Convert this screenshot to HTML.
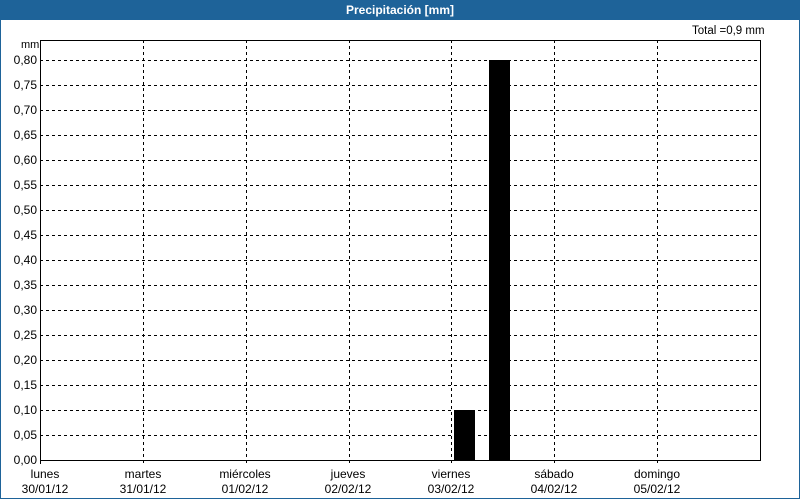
<!DOCTYPE html>
<html><head><style>
body{margin:0;width:800px;height:500px;background:#fff;font-family:"Liberation Sans",sans-serif;font-size:12px;color:#000;position:relative;overflow:hidden}
.hdr{position:absolute;left:0;top:0;width:800px;height:20px;background:#1e6399;color:#fff;font-weight:bold;text-align:center;line-height:20px;font-size:12px}
.frame{position:absolute;left:0;top:20px;width:798px;height:478px;border:1px solid #1e6399;border-top:0}
.t{position:absolute;white-space:nowrap}
.yl{position:absolute;right:763px;text-align:right}
.xl{position:absolute;width:80px;text-align:center;line-height:15px}
</style></head><body>
<div class="hdr">Precipitación [mm]</div>
<div class="frame"></div>
<div class="t" style="left:692px;top:25px;font-size:11.5px">Total =0,9 mm</div>
<div class="t" style="left:21px;top:39px;font-size:11px">mm</div>
<svg style="position:absolute;left:0;top:0" width="800" height="500">
<g stroke="#000" stroke-width="1" stroke-dasharray="3,3" shape-rendering="crispEdges">
<line x1="40" x2="761" y1="60.5" y2="60.5"/><line x1="40" x2="761" y1="85.5" y2="85.5"/><line x1="40" x2="761" y1="110.5" y2="110.5"/><line x1="40" x2="761" y1="135.5" y2="135.5"/><line x1="40" x2="761" y1="160.5" y2="160.5"/><line x1="40" x2="761" y1="185.5" y2="185.5"/><line x1="40" x2="761" y1="210.5" y2="210.5"/><line x1="40" x2="761" y1="235.5" y2="235.5"/><line x1="40" x2="761" y1="260.5" y2="260.5"/><line x1="40" x2="761" y1="285.5" y2="285.5"/><line x1="40" x2="761" y1="310.5" y2="310.5"/><line x1="40" x2="761" y1="335.5" y2="335.5"/><line x1="40" x2="761" y1="360.5" y2="360.5"/><line x1="40" x2="761" y1="385.5" y2="385.5"/><line x1="40" x2="761" y1="410.5" y2="410.5"/><line x1="40" x2="761" y1="435.5" y2="435.5"/>
<line x1="143.5" x2="143.5" y1="40" y2="464"/><line x1="246.5" x2="246.5" y1="40" y2="464"/><line x1="349.5" x2="349.5" y1="40" y2="464"/><line x1="451.5" x2="451.5" y1="40" y2="464"/><line x1="554.5" x2="554.5" y1="40" y2="464"/><line x1="657.5" x2="657.5" y1="40" y2="464"/>
</g>
<rect x="454" y="410" width="21" height="51" fill="#000"/>
<rect x="489" y="60" width="21" height="401" fill="#000"/>
<rect x="40.5" y="40.5" width="720" height="420" fill="none" stroke="#000" shape-rendering="crispEdges"/>
<line x1="40.5" x2="40.5" y1="460" y2="464" stroke="#000" shape-rendering="crispEdges"/>
</svg>
<div class="yl" style="top:53px">0,80</div><div class="yl" style="top:78px">0,75</div><div class="yl" style="top:103px">0,70</div><div class="yl" style="top:128px">0,65</div><div class="yl" style="top:153px">0,60</div><div class="yl" style="top:178px">0,55</div><div class="yl" style="top:203px">0,50</div><div class="yl" style="top:228px">0,45</div><div class="yl" style="top:253px">0,40</div><div class="yl" style="top:278px">0,35</div><div class="yl" style="top:303px">0,30</div><div class="yl" style="top:328px">0,25</div><div class="yl" style="top:353px">0,20</div><div class="yl" style="top:378px">0,15</div><div class="yl" style="top:403px">0,10</div><div class="yl" style="top:428px">0,05</div><div class="yl" style="top:453px">0,00</div>
<div class="xl" style="left:5px;top:467px">lunes<br>30/01/12</div>
<div class="xl" style="left:103px;top:467px">martes<br>31/01/12</div>
<div class="xl" style="left:205px;top:467px">miércoles<br>01/02/12</div>
<div class="xl" style="left:308px;top:467px">jueves<br>02/02/12</div>
<div class="xl" style="left:411px;top:467px">viernes<br>03/02/12</div>
<div class="xl" style="left:514px;top:467px">sábado<br>04/02/12</div>
<div class="xl" style="left:617px;top:467px">domingo<br>05/02/12</div>
</body></html>
